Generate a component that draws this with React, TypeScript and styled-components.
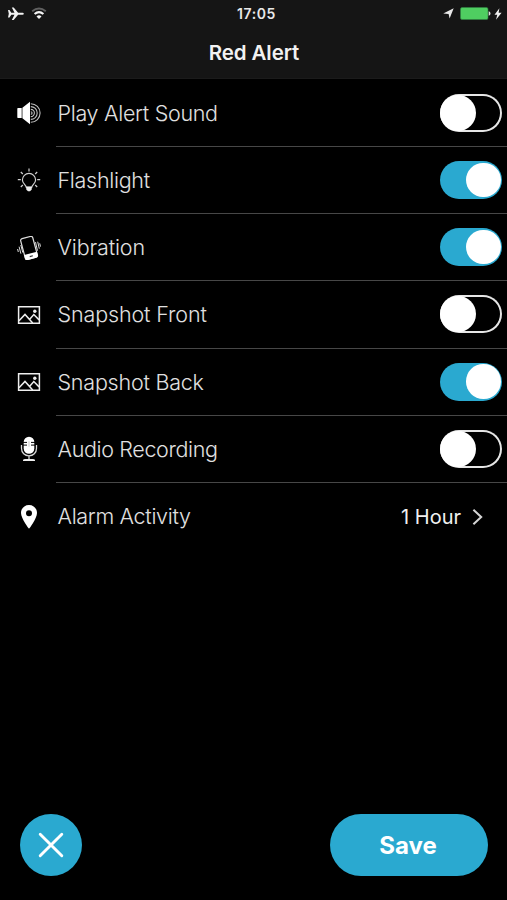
import React, { useState } from 'react';
import styled, { createGlobalStyle } from 'styled-components';

const GlobalStyle = createGlobalStyle`
  *, *::before, *::after { box-sizing: border-box; }
  body { margin: 0; background: #000; }
  button { border: 0; padding: 0; margin: 0; font: inherit; color: inherit; background: none; }
`;

const Screen = styled.main`
  display: flex;
  flex-direction: column;
  width: 507px;
  height: 900px;
  overflow: hidden;
  background: #000;
  color: #e0e0e0;
  font-family: Inter, "Liberation Sans", sans-serif;
`;

const Header = styled.header`
  flex: none;
  height: 79px;
  background: #151515;
  border-bottom: 1px solid #1b1b1b;
`;

const StatusBar = styled.div`
  display: grid;
  grid-template-columns: 1fr auto 1fr;
  align-items: center;
  height: 27px;
  padding: 0 5px 0 7px;
`;

const StatusGroup = styled.div<{ $end?: boolean }>`
  display: flex;
  align-items: center;
  justify-content: ${(p) => (p.$end ? 'flex-end' : 'flex-start')};
  height: 27px;
  svg { display: block; }
`;

const Spacer = styled.span<{ $width: number }>`
  flex: none;
  width: ${(p) => p.$width}px;
`;

const Clock = styled.span`
  padding-left: 4px;
  font-size: 14px;
  font-weight: 600;
  line-height: 27px;
  letter-spacing: 0.6px;
  color: #e8e8e8;
`;

const Title = styled.h1`
  margin: 0;
  padding-left: 1px;
  text-align: center;
  font-size: 20.5px;
  font-weight: 600;
  line-height: 52px;
  letter-spacing: -0.1px;
  color: #f2f2f2;
`;

const List = styled.ul`
  display: flex;
  flex-direction: column;
  list-style: none;
  margin: 0;
  padding: 0.5px 0 0;
`;

const Row = styled.li`
  display: flex;
  height: 67.25px;
`;

const IconCell = styled.span`
  flex: none;
  display: flex;
  align-items: center;
  justify-content: center;
  width: 56px;
  padding-left: 2px;
  svg { display: block; }
`;

const RowBody = styled.div<{ $last?: boolean }>`
  flex: 1;
  display: flex;
  align-items: center;
  justify-content: space-between;
  padding: 0 5px 0 1.5px;
  border-bottom: 1px solid ${(p) => (p.$last ? 'transparent' : '#474747')};
`;

const Label = styled.span<{ $spacing: number }>`
  font-size: 21.5px;
  font-weight: 300;
  line-height: 28px;
  letter-spacing: ${(p) => p.$spacing}px;
  white-space: nowrap;
`;

const Track = styled.button<{ $on: boolean }>`
  display: flex;
  align-items: center;
  justify-content: ${(p) => (p.$on ? 'flex-end' : 'flex-start')};
  width: 62px;
  height: 38px;
  padding: 0 ${(p) => (p.$on ? 1.5 : 0)}px;
  border-radius: 19px;
  background: ${(p) => (p.$on ? '#2aa9d0' : '#000')};
  box-shadow: ${(p) => (p.$on ? 'none' : 'inset 0 0 0 2px #e6e6e6')};
`;

const Thumb = styled.span<{ $on: boolean }>`
  width: ${(p) => (p.$on ? 34.5 : 36)}px;
  height: ${(p) => (p.$on ? 34.5 : 36)}px;
  border-radius: 50%;
  background: #fff;
`;

const Value = styled.span`
  display: flex;
  align-items: center;
  gap: 11px;
  padding: 1px 18px 0 0;
  font-size: 20px;
  font-weight: 400;
  color: #f0f0f0;
  svg { display: block; }
`;

const Actions = styled.footer`
  display: flex;
  justify-content: space-between;
  margin-top: auto;
  padding: 0 19px 24px 20px;
`;

const CloseButton = styled.button`
  display: flex;
  align-items: center;
  justify-content: center;
  width: 62px;
  height: 62px;
  border-radius: 50%;
  background: #2aa9d0;
`;

const SaveButton = styled.button`
  width: 158px;
  height: 62px;
  padding: 1px 2px 0 0;
  border-radius: 31px;
  background: #2aa9d0;
  color: #fff;
  font-size: 24px;
  font-weight: 700;
  line-height: 62px;
`;

const Plane = () => (
  <svg width="18" height="16" viewBox="0 0 18 16" fill="#f2f2f2">
    <path d="M1 4h1.5l1.8 2.7h3.2L4.8 1.5h1.9l4.4 5.2h4.5q1.2 0 1.2 1t-1.2 1h-4.5l-4.4 5.2H4.8l2.7-5.2H4.3l-1.8 2.7H1l.8-3.7z" />
  </svg>
);

const Wifi = () => (
  <svg width="16" height="13" viewBox="0 0 16 13" fill="none">
    <path d="M1.2 4.3Q8-1.1 14.8 4.3" stroke="#606060" strokeWidth="1.9" />
    <path d="M3.6 7Q8 3.1 12.4 7" stroke="#f4f4f4" strokeWidth="2.1" />
    <path d="M5.5 9.5Q8 7.2 10.5 9.5L8 12z" fill="#f4f4f4" />
  </svg>
);

const LocationArrow = () => (
  <svg width="11" height="11" viewBox="0 0 11 11" fill="#e8e8e8">
    <path d="M10.7.3L6.6 10.6 5.6 6 .2 5.4z" />
  </svg>
);

const Battery = () => (
  <svg width="31" height="13" viewBox="0 0 31 13">
    <rect x=".5" y=".5" width="27.5" height="12" rx="1.5" fill="#4fce61" stroke="#318443" strokeWidth=".6" />
    <path d="M28.7 4.2q1.8.4 1.8 2.3t-1.8 2.3z" fill="#ddd" />
  </svg>
);

const Bolt = () => (
  <svg width="8" height="12" viewBox="0 0 8 12" fill="#f0f0f0">
    <path d="M5.4.3L.5 6.8h2.8L2 11.7l5.6-7H4.6z" />
  </svg>
);

const SpeakerIcon = () => (
  <svg width="24" height="24" viewBox="0 0 24 24" fill="none" stroke="#bdbdbd" strokeWidth="1.1">
    <path d="M.9 7h3.8v10H.9Q.3 17 .3 16V8Q.3 7 .9 7zM5.4 6.8L13 .8v22.4l-7.6-6z" fill="#fff" stroke="none" />
    <path d="M13.8 2.7a9.3 9.3 0 010 18.6M13.8 5.6a6.4 6.4 0 010 12.8M13.8 8.4a3.6 3.6 0 010 7.2M13.8 10.7a1.3 1.3 0 010 2.6" />
  </svg>
);

const BulbIcon = () => (
  <svg width="24" height="24" viewBox="0 0 24 24" fill="none" stroke="#d0d0d0" strokeWidth="1.2">
    <path d="M9.2 19.2c-.1-2.5-3.8-3.5-3.8-7.2a6.6 6.6 0 0113.2 0c0 3.7-3.7 4.7-3.8 7.2z" />
    <path d="M9 18.7h6l-.4 3-1.6 1.6h-2l-1.6-1.6z" fill="#eee" stroke="none" />
    <path d="M12 .5v3M.8 11.7h3M20.2 11.7h3M3.8 4l2 2M20.2 4l-2 2M3.8 19l2-2M20.2 19l-2-2" />
  </svg>
);

const PhoneIcon = () => (
  <svg width="24" height="24" viewBox="0 0 24 24" fill="none" stroke="#ddd">
    <g transform="rotate(-15 12 12)">
      <rect x="5.8" y="1.2" width="12.5" height="21.6" rx="1.9" strokeWidth="1.2" />
      <path d="M5.4 17.6h13.3V21q0 2.2-2.2 2.2h-9Q5.4 23.2 5.4 21z" fill="#fff" stroke="none" />
      <path d="M10.5 20.5h3.2" stroke="#333" strokeWidth="1.1" />
    </g>
    <path d="M3.8 9l2 7.6M2.1 10.7l1.8 7M.6 13l.7 3M18.5 6.1l2 8.6M20.7 5.7l1.6 7M22.7 7.3l.8 3.3" strokeWidth="1" />
  </svg>
);

const PictureIcon = () => (
  <svg width="24" height="20" viewBox="0 0 24 20" fill="none" stroke="#eee" strokeWidth="1.5">
    <path d="M1.6 1.7h20.8v16.6H1.6z" />
    <path d="M2 15.8l6-6.4 7.7 8.5M12.5 14.4l4.3-4.9 5.3 5.4" />
    <circle cx="17.8" cy="6.2" r="1.7" fill="#eee" stroke="none" />
  </svg>
);

const MicIcon = () => (
  <svg width="18" height="26" viewBox="0 0 18 26" fill="none" stroke="#d8d8d8">
    <rect x="3.7" y=".7" width="10.6" height="17" rx="5.3" fill="#fff" stroke="none" />
    <path d="M3 6.4h4M11 6.4h4M3 9.1h4M11 9.1h4" stroke="#000" strokeWidth="1" />
    <path d="M9 5.2v5.5" stroke="#aaa" strokeWidth=".6" />
    <path d="M1.5 9v3.3C1.5 17 4.8 19.8 9 19.8s7.5-2.8 7.5-7.5V9M9 20v4" strokeWidth="1.3" />
    <path d="M3 25v-.7q0-1.3 2.5-1.3h7q2.5 0 2.5 1.3v.7z" fill="#eee" stroke="none" />
  </svg>
);

const PinIcon = () => (
  <svg width="18" height="26" viewBox="0 0 18 26" fill="#fff">
    <path fillRule="evenodd" d="M9 1C4.4 1 1 4.5 1 9c0 5.7 8 15.8 8 15.8S17 14.7 17 9c0-4.5-3.4-8-8-8zm0 5.2a3 3 0 110 6 3 3 0 010-6z" />
  </svg>
);

const Chevron = () => (
  <svg width="12" height="18" viewBox="0 0 12 18" fill="none" stroke="#d4d4d4" strokeWidth="2">
    <path d="M1.4 1.8L9.2 9l-7.8 7.2" />
  </svg>
);

const CloseIcon = () => (
  <svg width="26" height="26" viewBox="0 0 26 26" fill="none" stroke="#fff" strokeWidth="2.9" strokeLinecap="round">
    <path d="M2.2 2.2l21.6 21.6M23.8 2.2L2.2 23.8" />
  </svg>
);

const options = [
  { label: 'Play Alert Sound', Icon: SpeakerIcon, on: false, spacing: -0.3 },
  { label: 'Flashlight', Icon: BulbIcon, on: true, spacing: -0.3 },
  { label: 'Vibration', Icon: PhoneIcon, on: true, spacing: -0.15 },
  { label: 'Snapshot Front', Icon: PictureIcon, on: false, spacing: -0.13 },
  { label: 'Snapshot Back', Icon: PictureIcon, on: true, spacing: -0.22 },
  { label: 'Audio Recording', Icon: MicIcon, on: false, spacing: -0.35 },
];

function Toggle({ label, initial }: { label: string; initial: boolean }) {
  const [on, setOn] = useState(initial);
  return (
    <Track $on={on} role="switch" aria-checked={on} aria-label={label} onClick={() => setOn(!on)}>
      <Thumb $on={on} />
    </Track>
  );
}

export default function App() {
  return (
    <Screen>
      <GlobalStyle />
      <Header>
        <StatusBar>
          <StatusGroup>
            <Plane />
            <Spacer $width={6} />
            <Wifi />
          </StatusGroup>
          <Clock>17:05</Clock>
          <StatusGroup $end>
            <LocationArrow />
            <Spacer $width={6} />
            <Battery />
            <Spacer $width={3} />
            <Bolt />
          </StatusGroup>
        </StatusBar>
        <Title>Red Alert</Title>
      </Header>
      <List>
        {options.map(({ label, Icon, on, spacing }) => (
          <Row key={label}>
            <IconCell><Icon /></IconCell>
            <RowBody>
              <Label $spacing={spacing}>{label}</Label>
              <Toggle label={label} initial={on} />
            </RowBody>
          </Row>
        ))}
        <Row>
          <IconCell><PinIcon /></IconCell>
          <RowBody $last>
            <Label $spacing={-0.33}>Alarm Activity</Label>
            <Value>1 Hour<Chevron /></Value>
          </RowBody>
        </Row>
      </List>
      <Actions>
        <CloseButton aria-label="Close"><CloseIcon /></CloseButton>
        <SaveButton>Save</SaveButton>
      </Actions>
    </Screen>
  );
}
